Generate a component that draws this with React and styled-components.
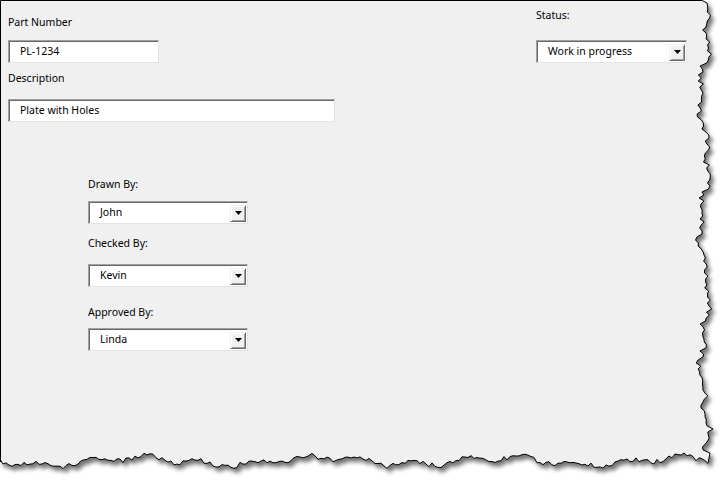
import styled, { createGlobalStyle } from 'styled-components';

const GlobalStyle = createGlobalStyle`
  html, body {
    margin: 0;
    padding: 0;
    background: #ffffff;
  }
`;

const Paper = styled.div`
  position: relative;
  width: 726px;
  height: 483px;
  overflow: hidden;
  font-family: "Noto Sans", "Open Sans", sans-serif;
  font-size: 10.5px;
  color: #000;
`;

const Edge = styled.svg`
  position: absolute;
  left: 0;
  top: 0;
`;

const Form = styled.div`
  position: relative;
  display: flex;
  flex-direction: column;
  padding: 0 39px 0 8px;
`;

const TopRow = styled.div`
  display: flex;
  justify-content: space-between;
`;

const Column = styled.div`
  display: flex;
  flex-direction: column;
  padding-top: ${(p) => p.$top || 0}px;
  margin-left: ${(p) => p.$left || 0}px;
`;

const Field = styled.div`
  display: flex;
  flex-direction: column;
  margin-top: ${(p) => p.$mt || 0}px;
`;

const Label = styled.div`
  line-height: 15px;
  height: 15px;
  margin-bottom: ${(p) => p.$gap}px;
  white-space: nowrap;
`;

const TextBox = styled.div`
  box-sizing: border-box;
  width: ${(p) => p.$w}px;
  height: 23px;
  background: #fff;
  border-top: 1px solid #a0a0a0;
  border-left: 1px solid #a0a0a0;
  border-right: 1px solid #e3e3e3;
  border-bottom: 1px solid #e3e3e3;
  box-shadow: inset 1px 1px 0 #696969;
  display: flex;
  align-items: center;
  padding-left: 11px;
  line-height: 15px;
`;

const SelectBox = styled(TextBox)`
  justify-content: space-between;
  padding-right: 1px;
`;

const DropButton = styled.div`
  box-sizing: border-box;
  width: 16px;
  height: 17px;
  margin-top: 1px;
  background: #f0f0f0;
  border-top: 1px solid #f0f0f0;
  border-left: 1px solid #f0f0f0;
  border-right: 1px solid #696969;
  border-bottom: 1px solid #696969;
  box-shadow: inset 1px 1px 0 #fff, inset -1px -1px 0 #a0a0a0;
  display: flex;
  align-items: center;
  justify-content: center;
`;

const rnd = (i) => {
  const x = Math.sin(i * 12.9898 + 78.233) * 43758.5453;
  return x - Math.floor(x);
};

function tornPath() {
  const pts = ['M0.5,0.5'];
  let i = 0;
  for (let y = 0; y <= 452; y += 3) {
    const x = 704 + 4 * Math.sin(y / 21) + 2.5 * Math.sin(y / 6.7) + (rnd(i++) - 0.5) * 6;
    pts.push(`L${x.toFixed(1)},${y === 0 ? 0.5 : y}`);
  }
  pts.push('L710,453');
  for (let x = 708; x >= 0; x -= 3) {
    const y = 461 + 3.5 * Math.sin(x / 29) + 2.5 * Math.sin(x / 8.5) + (rnd(i++) - 0.5) * 5;
    pts.push(`L${x},${y.toFixed(1)}`);
  }
  pts.push('L0.5,462 Z');
  return pts.join(' ');
}

const ArrowDown = () => (
  <svg width="7" height="4" viewBox="0 0 7 4">
    <path d="M0 0h7L3.5 4z" fill="#000" />
  </svg>
);

const Select = ({ w, value }) => (
  <SelectBox $w={w}>
    <span>{value}</span>
    <DropButton>
      <ArrowDown />
    </DropButton>
  </SelectBox>
);

export default function App() {
  return (
    <Paper>
      <GlobalStyle />
      <Edge width="726" height="483">
        <defs>
          <filter id="shadow" x="-5%" y="-5%" width="115%" height="115%">
            <feDropShadow dx="3" dy="4" stdDeviation="2" floodColor="#000" floodOpacity="0.55" />
          </filter>
        </defs>
        <path d={tornPath()} fill="#f0f0f0" stroke="#000" strokeWidth="1" filter="url(#shadow)" />
      </Edge>
      <Form>
        <TopRow>
          <Column $top={15}>
            <Field>
              <Label $gap={10}>Part Number</Label>
              <TextBox $w={151}>PL-1234</TextBox>
            </Field>
            <Field $mt={8}>
              <Label $gap={13}>Description</Label>
              <TextBox $w={327}>Plate with Holes</TextBox>
            </Field>
          </Column>
          <Column $top={8}>
            <Field>
              <Label $gap={17}>Status:</Label>
              <Select w={151} value="Work in progress" />
            </Field>
          </Column>
        </TopRow>
        <Column $left={80}>
          <Field $mt={55}>
            <Label $gap={9}>Drawn By:</Label>
            <Select w={160} value="John" />
          </Field>
          <Field $mt={12}>
            <Label $gap={13}>Checked By:</Label>
            <Select w={160} value="Kevin" />
          </Field>
          <Field $mt={18}>
            <Label $gap={8}>Approved By:</Label>
            <Select w={160} value="Linda" />
          </Field>
        </Column>
      </Form>
    </Paper>
  );
}
